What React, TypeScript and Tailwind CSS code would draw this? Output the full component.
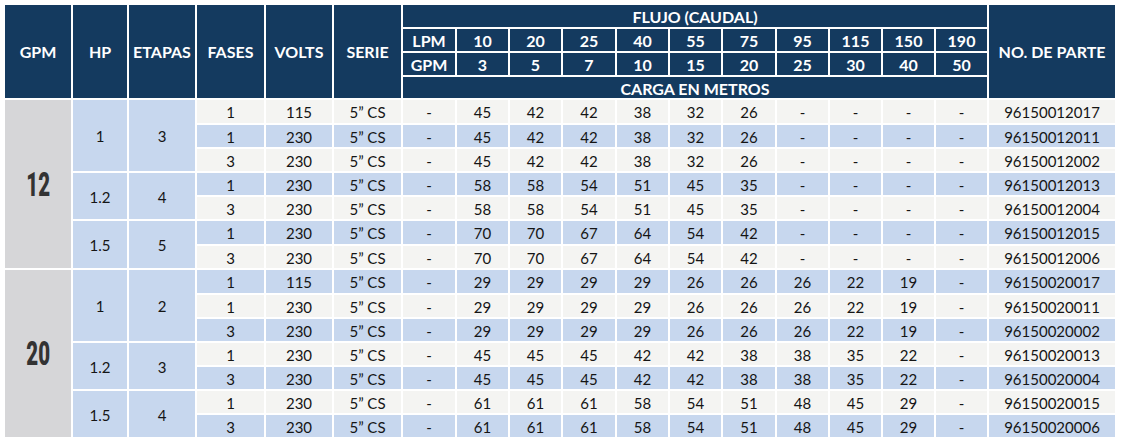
import React from 'react';

const flujoLpm = ['10', '20', '25', '40', '55', '75', '95', '115', '150', '190'];
const flujoGpm = ['3', '5', '7', '10', '15', '20', '25', '30', '40', '50'];

type Row = { fases: string; volts: string; carga: string[]; parte: string };
type Sub = { hp: string; etapas: string; rows: Row[] };
type Group = { gpm: string; subs: Sub[] };

const r = (fases: string, volts: string, carga: string, parte: string): Row => ({
  fases,
  volts,
  carga: carga.split(' '),
  parte,
});

const groups: Group[] = [
  {
    gpm: '12',
    subs: [
      {
        hp: '1',
        etapas: '3',
        rows: [
          r('1', '115', '45 42 42 38 32 26 - - - -', '96150012017'),
          r('1', '230', '45 42 42 38 32 26 - - - -', '96150012011'),
          r('3', '230', '45 42 42 38 32 26 - - - -', '96150012002'),
        ],
      },
      {
        hp: '1.2',
        etapas: '4',
        rows: [
          r('1', '230', '58 58 54 51 45 35 - - - -', '96150012013'),
          r('3', '230', '58 58 54 51 45 35 - - - -', '96150012004'),
        ],
      },
      {
        hp: '1.5',
        etapas: '5',
        rows: [
          r('1', '230', '70 70 67 64 54 42 - - - -', '96150012015'),
          r('3', '230', '70 70 67 64 54 42 - - - -', '96150012006'),
        ],
      },
    ],
  },
  {
    gpm: '20',
    subs: [
      {
        hp: '1',
        etapas: '2',
        rows: [
          r('1', '115', '29 29 29 29 26 26 26 22 19 -', '96150020017'),
          r('1', '230', '29 29 29 29 26 26 26 22 19 -', '96150020011'),
          r('3', '230', '29 29 29 29 26 26 26 22 19 -', '96150020002'),
        ],
      },
      {
        hp: '1.2',
        etapas: '3',
        rows: [
          r('1', '230', '45 45 45 42 42 38 38 35 22 -', '96150020013'),
          r('3', '230', '45 45 45 42 42 38 38 35 22 -', '96150020004'),
        ],
      },
      {
        hp: '1.5',
        etapas: '4',
        rows: [
          r('1', '230', '61 61 61 58 54 51 48 45 29 -', '96150020015'),
          r('3', '230', '61 61 61 58 54 51 48 45 29 -', '96150020006'),
        ],
      },
    ],
  },
];

const head = 'bg-[#143a5f] text-white font-bold text-[16px] flex items-center justify-center';
const cell = 'flex items-center justify-center pt-[2px] text-[15px] text-[#151515]';

export default function App() {
  let rowIndex = 0;
  const body: React.ReactNode[] = [];

  groups.forEach(g => {
    body.push(
      <div key={'g' + g.gpm} className="row-span-7 bg-[#d6d6d8] flex items-center justify-center">
        <span className="inline-block scale-x-[0.62] font-['Roboto',sans-serif] font-black text-[33px] leading-none text-[#333333]">
          {g.gpm}
        </span>
      </div>
    );
    g.subs.forEach((s, si) => {
      s.rows.forEach((row, ri) => {
        const bg = rowIndex % 2 === 1 ? 'bg-[#c7d7ee]' : 'bg-[#f4f4f2]';
        if (ri === 0) {
          const span = s.rows.length === 3 ? 'row-span-3' : 'row-span-2';
          body.push(
            <div key={`hp${g.gpm}-${si}`} className={`${span} bg-[#c7d7ee] ${cell}`}>
              {s.hp}
            </div>,
            <div key={`et${g.gpm}-${si}`} className={`${span} bg-[#c7d7ee] ${cell}`}>
              {s.etapas}
            </div>
          );
        }
        body.push(
          <div key={`f${rowIndex}`} className={`${bg} ${cell}`}>{row.fases}</div>,
          <div key={`v${rowIndex}`} className={`${bg} ${cell}`}>{row.volts}</div>,
          <div key={`s${rowIndex}`} className={`${bg} ${cell}`}>5” CS</div>,
          <div key={`l${rowIndex}`} className={`${bg} ${cell}`}>-</div>
        );
        row.carga.forEach((c, ci) => {
          body.push(
            <div key={`c${rowIndex}-${ci}`} className={`${bg} ${cell}`}>{c}</div>
          );
        });
        body.push(
          <div key={`p${rowIndex}`} className={`${bg} ${cell}`}>{row.parte}</div>
        );
        rowIndex++;
      });
    });
  });

  return (
    <div className="bg-white w-[1121px] h-[443px] overflow-hidden font-['Lato',sans-serif]">
      <div className="ml-[5px] mt-[5px] grid gap-[2px] grid-cols-[66px_54px_66px_67px_66px_67px_52px_51px_51px_52px_51px_51px_52px_51px_51px_51px_51px_126px] grid-rows-[22px_22px_22px_21px_23px_22px_22px_22px_22px_23px_22px_23px_22px_22px_22px_22px_22px_22px]">
        {/* header */}
        <div className={`row-span-4 ${head}`}>GPM</div>
        <div className={`row-span-4 ${head}`}>HP</div>
        <div className={`row-span-4 ${head}`}>ETAPAS</div>
        <div className={`row-span-4 ${head}`}>FASES</div>
        <div className={`row-span-4 ${head}`}>VOLTS</div>
        <div className={`row-span-4 ${head}`}>SERIE</div>
        <div className={`col-span-11 ${head} pt-[2px]`}>FLUJO (CAUDAL)</div>
        <div className={`row-span-4 ${head}`}>NO. DE PARTE</div>

        <div className={`${head} pt-[2px]`}>LPM</div>
        {flujoLpm.map(v => (
          <div key={'lpm' + v} className={`${head} pt-[2px]`}>{v}</div>
        ))}
        <div className={`${head} pt-[2px]`}>GPM</div>
        {flujoGpm.map(v => (
          <div key={'gpm' + v} className={`${head} pt-[2px]`}>{v}</div>
        ))}
        <div className={`col-span-11 ${head} pt-[2px]`}>CARGA EN METROS</div>

        {body}
      </div>
    </div>
  );
}
